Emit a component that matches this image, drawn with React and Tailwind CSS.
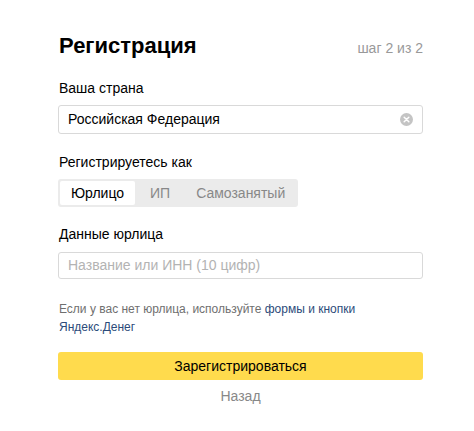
import React from "react";

export default function App() {
  return (
    <div className="min-h-screen bg-white font-['Liberation_Sans',Arial,sans-serif] text-[#000]">
      <div className="ml-[58px] w-[365px] pt-[33px]">
        {/* header */}
        <div className="flex items-baseline justify-between pl-[1px]">
          <h1 className="text-[22px] font-bold leading-[26px]">Регистрация</h1>
          <span className="text-[14px] text-[#999]">шаг 2 из 2</span>
        </div>

        <div className="mt-[20px] text-[14px] leading-[18px] pl-[1px]">Ваша страна</div>
        <div className="mt-[8px] flex h-[29px] items-center justify-between rounded-[3px] border border-[#d9d9d9] px-[9px]">
          <span className="text-[14px]">Российская Федерация</span>
          <svg width="13" height="13" viewBox="0 0 14 14">
            <circle cx="7" cy="7" r="7" fill="#c4c4c4" />
            <path d="M4.5 4.5l5 5M9.5 4.5l-5 5" stroke="#fff" strokeWidth="1.6" strokeLinecap="round" />
          </svg>
        </div>

        <div className="mt-[19px] text-[14px] leading-[18px] pl-[1px]">Регистрируетесь как</div>
        <div className="mt-[8px] inline-flex h-[28px] items-center rounded-[3px] bg-[#ebebeb] p-[2px] text-[14px]">
          <div className="flex h-full w-[75px] items-center justify-center rounded-[2px] bg-white">Юрлицо</div>
          <div className="flex h-full items-center px-[15px] text-[#888]">ИП</div>
          <div className="flex h-full items-center pl-[11px] pr-[11px] text-[#888]">Самозанятый</div>
        </div>

        <div className="mt-[18px] text-[14px] leading-[18px] pl-[1px]">Данные юрлица</div>
        <div className="mt-[9px] flex h-[27px] items-center rounded-[3px] border border-[#d9d9d9] px-[9px]">
          <span className="text-[14px] text-[#b3b3b3]">Название или ИНН (10 цифр)</span>
        </div>

        <p className="mt-[21px] text-[12px] leading-[18px] text-[#6f6f6f] pl-[1px]">
          Если у вас нет юрлица, используйте{" "}
          <span className="text-[#2c4b7a]">формы и кнопки</span>
          <br />
          <span className="text-[#2c4b7a]">Яндекс.Денег</span>
        </p>

        <button className="mt-[16px] flex h-[28px] w-full items-center justify-center rounded-[3px] bg-[#ffdb4d] text-[14px] text-[#000]">
          Зарегистрироваться
        </button>
        <div className="mt-[6px] text-center text-[14px] text-[#888]">Назад</div>
      </div>
    </div>
  );
}
